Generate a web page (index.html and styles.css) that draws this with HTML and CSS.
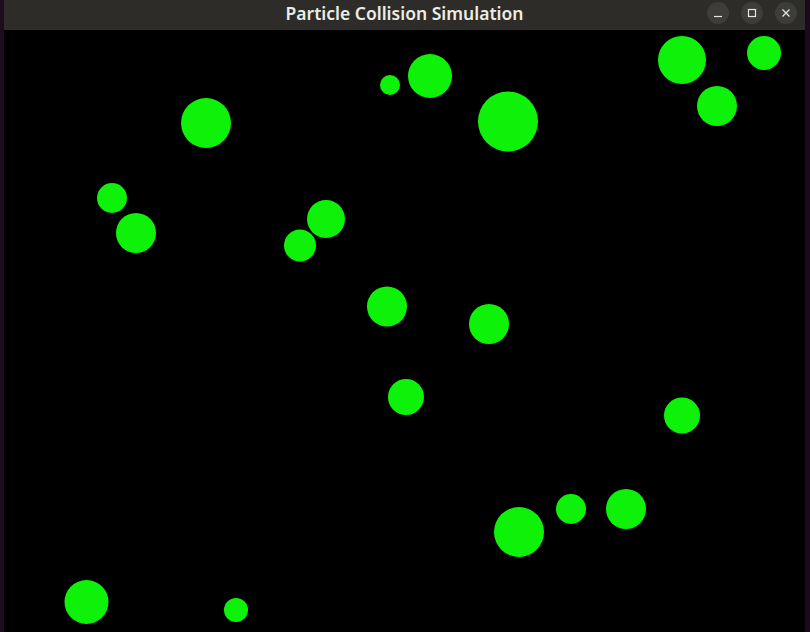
FILE: index.html
```html
<!DOCTYPE html>
<html>
<head>
<meta charset="utf-8">
<link rel="stylesheet" href="styles.css">
</head>
<body>
<div class="screen">
  <div class="edge edge-left"></div>
  <div class="window">
    <div class="titlebar">
      <div class="title">Particle Collision Simulation</div>
      <div class="controls">
        <div class="btn"><svg width="10" height="10" viewBox="0 0 10 10"><line x1="1" y1="8.5" x2="9" y2="8.5" stroke="#e6e6e0" stroke-width="1.2"/></svg></div>
        <div class="btn"><svg width="10" height="10" viewBox="0 0 10 10"><rect x="1.5" y="1.5" width="7" height="7" fill="none" stroke="#e6e6e0" stroke-width="1.2"/></svg></div>
        <div class="btn"><svg width="10" height="10" viewBox="0 0 10 10"><path d="M1.5 1.5 L8.5 8.5 M8.5 1.5 L1.5 8.5" stroke="#e6e6e0" stroke-width="1.3"/></svg></div>
      </div>
    </div>
    <div class="canvas">
      <svg class="particles" width="801" height="602" viewBox="4 30 801 602">
        <g fill="#0ef20a">
          <circle cx="390" cy="85" r="10"/>
          <circle cx="430" cy="76" r="22"/>
          <circle cx="508" cy="121.5" r="30"/>
          <circle cx="682" cy="60" r="24"/>
          <circle cx="764" cy="53" r="17"/>
          <circle cx="717" cy="106" r="20"/>
          <circle cx="206" cy="123" r="25"/>
          <circle cx="112" cy="198" r="15"/>
          <circle cx="136" cy="233" r="20"/>
          <circle cx="326" cy="219" r="19"/>
          <circle cx="300" cy="245.5" r="16"/>
          <circle cx="387" cy="306.5" r="20"/>
          <circle cx="489" cy="324" r="20"/>
          <circle cx="406" cy="397" r="18"/>
          <circle cx="682" cy="415.5" r="18"/>
          <circle cx="571" cy="509" r="15"/>
          <circle cx="626" cy="509" r="20"/>
          <circle cx="519" cy="532" r="25"/>
          <circle cx="86.5" cy="602" r="22"/>
          <circle cx="236" cy="610" r="12"/>
        </g>
      </svg>
    </div>
  </div>
  <div class="edge edge-right"></div>
</div>
</body>
</html>
```

FILE: styles.css
```css
html, body {
  margin: 0;
  padding: 0;
  background: #000;
  overflow: hidden;
}

.screen {
  display: flex;
  width: 810px;
  height: 632px;
}

.edge {
  flex: none;
  background: #1e0c1e;
}

.edge-left {
  width: 4px;
}

.edge-right {
  width: 5px;
  background: #1a0a1c;
}

.window {
  flex: none;
  width: 801px;
  display: flex;
  flex-direction: column;
}

.titlebar {
  flex: none;
  height: 30px;
  background: #2d2c28;
  position: relative;
  display: flex;
  align-items: center;
  justify-content: center;
}

.title {
  font-family: "Noto Sans", "DejaVu Sans", sans-serif;
  font-weight: 600;
  font-size: 17.5px;
  color: #ecece6;
  margin-top: -5px;
}

.controls {
  position: absolute;
  right: 8px;
  top: 2px;
  display: flex;
  gap: 12px;
}

.btn {
  width: 22px;
  height: 22px;
  border-radius: 50%;
  background: #3d3d39;
  display: flex;
  align-items: center;
  justify-content: center;
}

.canvas {
  flex: 1;
  background: #000;
  position: relative;
}

.particles {
  display: block;
}
```
